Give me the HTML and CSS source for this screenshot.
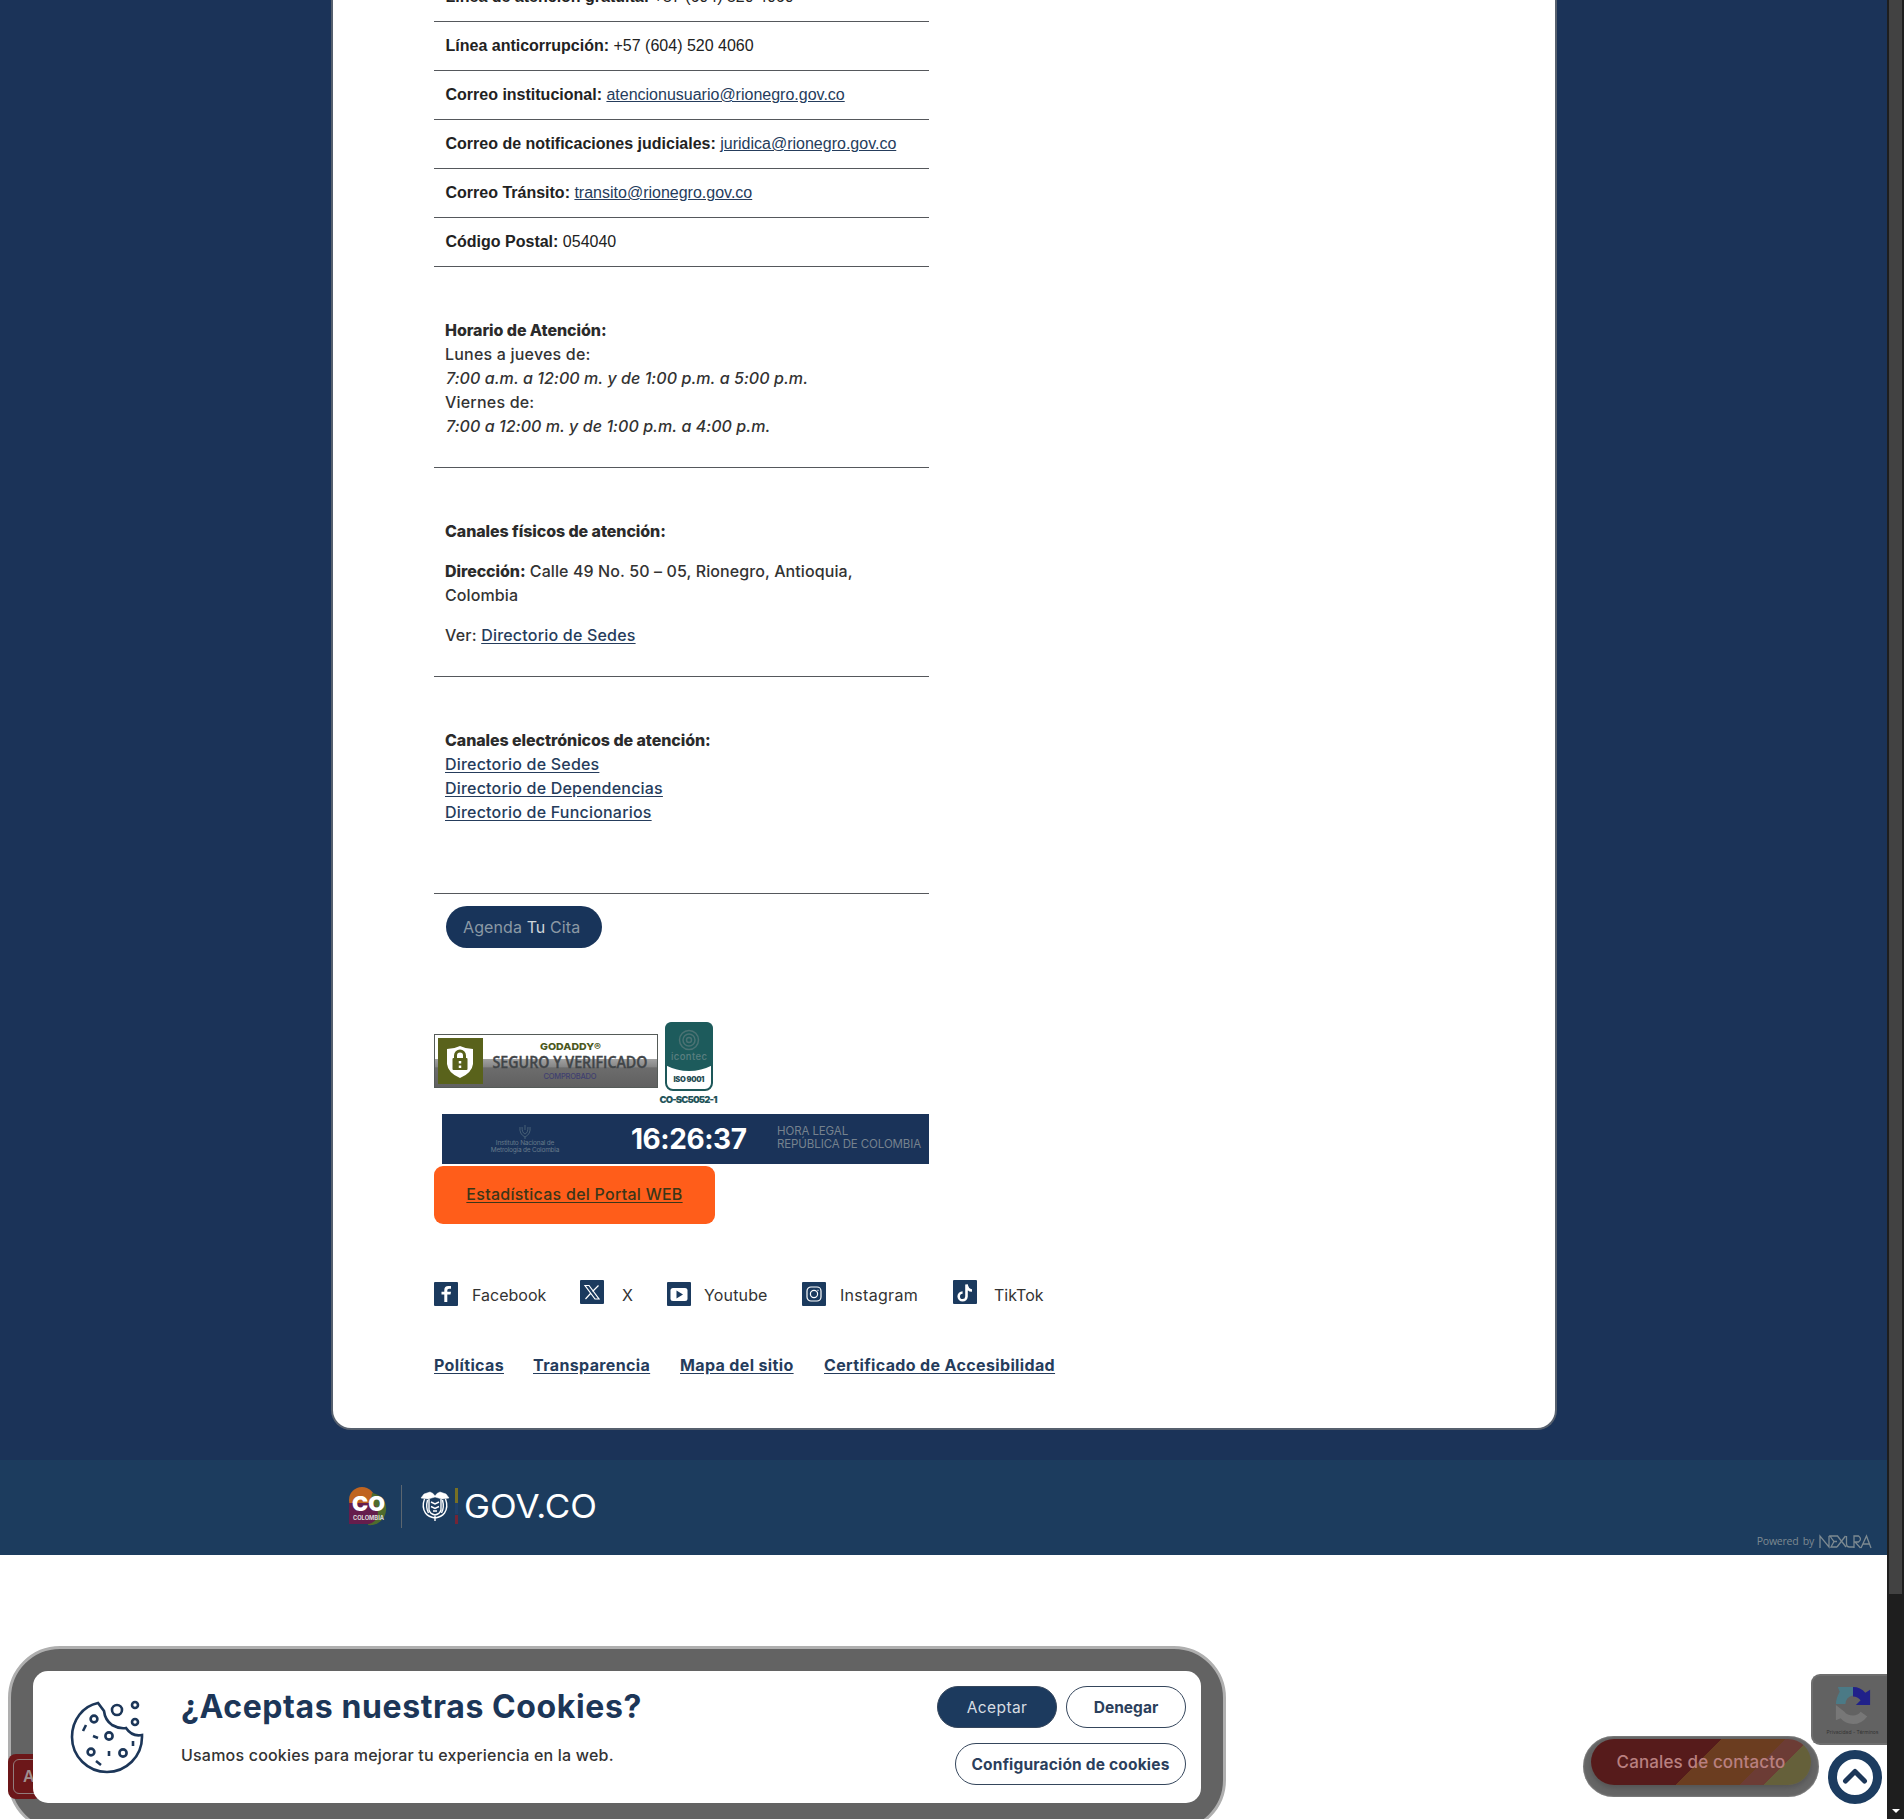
FILE: index.html
```html
<!DOCTYPE html>
<html lang="es">
<head>
<meta charset="utf-8">
<title>Alcaldía de Rionegro</title>
<link rel="stylesheet" href="styles.css">
</head>
<body>
<div class="window">
<div class="page">
  <main class="backdrop">
    <div class="card">
      <section class="contact">
        <p class="row row-cut"><b>Línea de atención gratuita:</b> +57 (604) 520 4060</p>
        <p class="row"><b>Línea anticorrupción:</b> +57 (604) 520 4060</p>
        <p class="row"><b>Correo institucional:</b> <a href="#">atencionusuario@rionegro.gov.co</a></p>
        <p class="row"><b>Correo de notificaciones judiciales:</b> <a href="#">juridica@rionegro.gov.co</a></p>
        <p class="row"><b>Correo Tránsito:</b> <a href="#">transito@rionegro.gov.co</a></p>
        <p class="row"><b>Código Postal:</b> 054040</p>
        <div class="block hours">
          <b>Horario de Atención:</b><br>Lunes a jueves de:<br><i>7:00 a.m. a 12:00 m. y de 1:00 p.m. a 5:00 p.m.</i><br>Viernes de:<br><i>7:00 a 12:00 m. y de 1:00 p.m. a 4:00 p.m.</i>
        </div>
        <div class="block places">
          <p><b>Canales físicos de atención:</b></p>
          <p class="address"><b>Dirección:</b> Calle 49 No. 50 – 05, Rionegro, Antioquia,<br>Colombia</p>
          <p>Ver: <a href="#">Directorio de Sedes</a></p>
        </div>
        <div class="block online">
          <b>Canales electrónicos de atención:</b><br><a href="#">Directorio de Sedes</a><br><a href="#">Directorio de Dependencias</a><br><a href="#">Directorio de Funcionarios</a>
        </div>
        <a class="appointment" href="#">Agenda <em>Tu</em> Cita</a>
      </section>

      <div class="seals">
        <svg class="seal" width="224" height="54" viewBox="0 0 224 54">
          <defs><linearGradient id="g" x1="0" y1="0" x2="0" y2="1"><stop offset="0" stop-color="#a2a2a2"/><stop offset=".28" stop-color="#858585"/><stop offset=".3" stop-color="#6c6c6c"/><stop offset="1" stop-color="#606060"/></linearGradient></defs>
          <rect width="224" height="54" fill="#fff"/><rect y="25" width="224" height="29" fill="url(#g)"/>
          <rect x=".5" y=".5" width="223" height="53" fill="none" stroke="#555b58"/>
          <rect x="4" y="4" width="45" height="46" fill="#59621b"/>
          <path d="M13 15q7 0 13-3q6 3 13 3v15q-1 9-13 14q-12-5-13-14z" fill="#fff"/>
          <rect x="18.500" y="24" width="15" height="12" rx="1" fill="#59621b"/><path d="M21.500 25v-3.500a4.500 4.500 0 0 1 9 0V25" fill="none" stroke="#59621b" stroke-width="3"/><path d="M26 27v2.500m0 2v2.500" stroke="#fff" stroke-width="2.500"/>
          <text x="136.500" y="16" class="s-brand" textLength="61" lengthAdjust="spacingAndGlyphs">GODADDY®</text>
          <text x="136" y="34" class="s-main" textLength="155" lengthAdjust="spacingAndGlyphs">SEGURO Y VERIFICADO</text>
          <text x="136" y="45" class="s-sub" textLength="53">COMPROBADO</text>
        </svg>
        <svg class="iso" width="60" height="84" viewBox="0 0 60 84">
          <rect x="7" y="1" width="46" height="67" rx="7" fill="#fff" stroke="#1d5759" stroke-width="2"/>
          <path d="M6 7q0-7 7-7h34q7 0 7 7v36q-24 12-48 0z" fill="#1d5b5c"/>
          <g fill="none" stroke="#4b7273" stroke-width="1.500"><circle cx="30" cy="18" r="9.500"/><circle cx="30" cy="18" r="6"/><circle cx="30" cy="18" r="2.500"/></g>
          <text x="30" y="38" class="i-name" textLength="36">icontec</text>
          <text x="30" y="60" class="i-iso" textLength="31">ISO 9001</text>
          <text x="29.500" y="81" class="i-code" textLength="58">CO-SC5052-1</text>
        </svg>
      </div>

      <div class="clock">
        <div class="institute">
          <svg width="14" height="16" viewBox="0 0 14 16" fill="none" stroke="#476077"><path d="M2 3q-1 7 5 10q6-3 5-10M7 1v5M4 3q0 6 3 7q3-1 3-7M7 13v2"/></svg>
          <span>Instituto Nacional de</span><span>Metrología de Colombia</span>
        </div>
        <span class="time">16:26:37</span>
        <span class="legal">HORA LEGAL<br>REPÚBLICA DE COLOMBIA</span>
      </div>
      <a class="stats" href="#">Estadísticas del Portal WEB</a>

      <nav class="social">
        <span class="net fb"><svg viewBox="0 0 24 24"><rect width="24" height="24" rx="1"/><path fill="#fff" d="M10.300 20v-7.500H7.500v-2.700h2.800V8q0-4 4-4h2.700v2.700h-2q-1.700 0-1.700 1.500v1.600H17l-.5 2.700h-3.200V20z"/></svg><b>Facebook</b></span>
        <span class="net tw up"><svg viewBox="0 0 24 24"><rect width="24" height="24" rx="1"/><path fill="none" stroke="#fff" stroke-width="1.200" d="M5 5.500h4L19 19h-4zM18.500 5.500l-6 6M10.500 13.500L5.500 19"/></svg><b>X</b></span>
        <span class="net yt"><svg viewBox="0 0 24 24"><rect width="24" height="24" rx="1"/><rect x="3.500" y="6" width="17" height="13" rx="2.500" fill="#fff"/><path d="M9.500 8.500v8l6.500-4z"/></svg><b>Youtube</b></span>
        <span class="net ig"><svg viewBox="0 0 24 24"><rect width="24" height="24" rx="1"/><g fill="none" stroke="#fff" stroke-width="1.200"><rect x="5" y="5" width="14" height="14" rx="4"/><circle cx="12" cy="12" r="3.600"/><path d="M15.500 8.300h1"/></g></svg><b>Instagram</b></span>
        <span class="net tt up"><svg viewBox="0 0 24 24"><rect width="24" height="24" rx="1"/><path fill="none" stroke="#fff" stroke-width="2.600" d="M19 10.500q-4.500 0-5.500-6v12a3.900 3.900 0 1 1-3.900-4"/></svg><b>TikTok</b></span>
      </nav>
      <nav class="links"><a class="k1" href="#">Políticas</a><a class="k2" href="#">Transparencia</a><a class="k3" href="#">Mapa del sitio</a><a class="k4" href="#">Certificado de Accesibilidad</a></nav>
    </div>
  </main>

  <footer class="footer">
    <svg class="govlogo" width="252" height="46" viewBox="0 0 252 46">
      <circle cx="14" cy="15" r="13" fill="#bf6420"/><path d="M24 8a16 16 0 1 1-4 32z" fill="#4f6b2d"/><path d="M1 18h22a11 11 0 0 1-2 21H1z" fill="#651d4c"/>
      <text x="4" y="26" class="co" textLength="33" lengthAdjust="spacingAndGlyphs">CO</text>
      <text x="5" y="34.500" class="colombia" textLength="31" lengthAdjust="spacingAndGlyphs">COLOMBIA</text>
      <path d="M53.500 0v43" stroke="#5b6670"/>
      <g fill="none" stroke="#fff" stroke-width="1.400"><path d="M76 9l6-2 3 1.500L87 11l2-2.500L92 7l6 2 3 4-7 1-7-2-7 2-7-1z" fill="#fff" stroke-width=".5"/><path d="M76.500 14q-3 8 1 14 3 4 9.500 5 6.500-1 9.500-5 4-6 1-14M79.500 15q-2 8 1 13M94.500 15q2 8-1 13M81 14v11q1 4 6 5 5-1 6-5V14M83 17l4 2 4-2M83 21.500l4 2 4-2M85 26h4M87 31v5"/></g>
      <path d="M108.500 3v15" stroke="#777024" stroke-width="3"/><path d="M108.500 18v11" stroke="#20416b" stroke-width="3"/><path d="M108.500 30v9" stroke="#732536" stroke-width="3"/>
      <text x="116" y="33" class="gov" textLength="133" lengthAdjust="spacingAndGlyphs">GOV.CO</text>
    </svg>
    <div class="powered"><span>Powered by</span>
      <svg width="53" height="15" viewBox="0 0 53 15" fill="none" stroke="#7c8991" stroke-width="1.300"><path d="M1 14V2l9 11V2M19 2h-8q2 3 4 5.500L12 13h6M14.500 7.500H18M18.500 2l8.500 11M26.500 2L18 13M27.500 2v8q0 3 3 3H35M35 14V2h4.500q4 3 0 6H36l5.500 6M42 14l5.500-12L52 14M44 10h6"/></svg>
    </div>
  </footer>
</div>
<div class="scrollbar"><div class="thumb"></div><div class="arrow"></div></div>
</div>

<div class="shade"></div>
<div class="access">A</div>
<div class="cookies">
  <svg class="cookie" width="74" height="76" viewBox="0 0 74 76" fill="none" stroke="#1c3658" stroke-width="2.600"><path d="M28 4C13 7 2 21 2 38a35 35 0 0 0 70 0v-2q-10 2-16-7-7 1-14-3-7-5-8-14z"/><circle cx="47" cy="11" r="5"/><circle cx="65" cy="6" r="3"/><circle cx="65" cy="23" r="3"/><circle cx="24" cy="20" r="3.400"/><circle cx="39" cy="37" r="3.600"/><circle cx="21" cy="53" r="3.400"/><circle cx="53" cy="54" r="3.600"/><path d="M16 26l-3 6M23 37l5 2M63 42v5M39 52v5M26 62l5 4"/></svg>
  <div class="ask"><h2>¿Aceptas nuestras Cookies?</h2><p>Usamos cookies para mejorar tu experiencia en la web.</p></div>
  <div class="choices"><button class="yes">Aceptar</button><button class="no">Denegar</button><button class="conf">Configuración de cookies</button></div>
</div>
<div class="channels"><div class="pill">Canales de contacto</div></div>
<div class="captcha">
  <svg width="38" height="38" viewBox="0 0 40 40"><path d="M4 1h16v9a10 10 0 0 0-8 9H2q0-6 4-13z" fill="#4b7a86"/><path d="M20 1q8 0 13 6l5-3v16H23l5-5q-3-4-8-4z" fill="#20218a"/><path d="M2 20l9 7q3 4 9 4 5 0 8-4l7 5q-6 8-15 8-8 0-13-6l-5 2z" fill="#777"/></svg>
  <span>Privacidad - Términos</span>
</div>
<div class="totop"><svg width="54" height="54" viewBox="0 0 54 54"><circle cx="27" cy="27" r="22.500" fill="#fff" stroke="#1c3c60" stroke-width="9"/><path d="M17.500 31l9.500-9.500 9.500 9.500" fill="none" stroke="#1c3658" stroke-width="5" stroke-linecap="round" stroke-linejoin="round"/></svg></div>
</body>
</html>
```
FILE: styles.css
```css
* { box-sizing: border-box; }
body { margin: 0; background: #fff; font: 500 16px/24px Inter, "Open Sans", sans-serif; color: #333; overflow: hidden; }
p, h2 { margin: 0; }
a { color: #253c5c; text-underline-offset: 2px; }
.window { display: flex; height: 1819px; }
.page { width: 1887px; }
.backdrop { height: 1460px; background: #1b3358; padding-left: 331px; overflow: hidden; }
.card { width: 1226px; height: 1430px; border: 2px solid #56606e; border-top: 0; border-radius: 0 0 20px 20px; background: #fff; padding-left: 101px; }
.contact { display: flow-root; width: 495px; height: 1022px; }
.row { height: 49px; border-bottom: 1px solid #55585c; padding: 10px 11.5px 0; font: 16px/27px "Liberation Sans", Arial, sans-serif; color: #222; white-space: nowrap; }
.row-cut { height: 26px; margin-top: -4px; padding-top: 0; line-height: 2px; }
.row a { text-underline-offset: 1px; }
.block { padding: 51px 11px 0; border-bottom: 1px solid #55585c; white-space: nowrap; letter-spacing: .2px; }
.block b { font-weight: 800; color: #2b2b2b; letter-spacing: -.08px; }
.block i { letter-spacing: .07px; padding-left: 1px; }
.address { letter-spacing: .1px; }
.hours { height: 201px; }
.places { height: 209px; }
.places p { margin-bottom: 16px; }
.online { height: 217px; }
.appointment { display: block; width: 156px; height: 42px; margin: 12px 0 0 12px; padding-left: 17px; border-radius: 21px; background: #18345a; color: #8b99a5; font-weight: 400; line-height: 42px; letter-spacing: .1px; text-decoration: none; }
.appointment em { font-style: normal; color: #cfd5da; }
.seals { display: flex; height: 92px; }
.seal { margin-top: 12px; }
.seals text { text-anchor: middle; }
.s-brand { font: 800 9.500px Inter, sans-serif; fill: #4b5820; }
.s-main { font: 600 17px "Open Sans", sans-serif; fill: #414548; stroke: #414548; stroke-width: .4px; }
.s-sub { font: 500 7.500px Inter, sans-serif; fill: #3f3f70; }
.iso { margin-left: 1px; }
.i-name { font: 500 9.500px Inter, sans-serif; fill: #5b7f80; }
.i-iso { font: 900 7.500px Inter, sans-serif; fill: #274e54; }
.i-code { font: 900 9.500px Inter, sans-serif; fill: #24545a; }
.clock { width: 487px; height: 50px; margin-left: 8px; background: #1a3359; display: flex; align-items: center; }
.institute { width: 68px; margin-left: 49px; display: flex; flex-direction: column; align-items: center; font: 6.500px/7px Inter, sans-serif; letter-spacing: -.22px; color: #667a8b; white-space: nowrap; }
.time { width: 115px; margin-left: 72px; font: 700 28px/48px Inter, sans-serif; letter-spacing: -.45px; color: #fff; white-space: nowrap; }
.legal { margin: -2px 0 0 31px; font: 400 11.500px/13px Inter, sans-serif; letter-spacing: -.1px; color: #76828e; white-space: nowrap; }
.stats { display: block; width: 281px; height: 58px; margin-top: 2px; border-radius: 9px; background: #ff5d1a; color: #3b3618; text-align: center; line-height: 57px; letter-spacing: .26px; }
.social { display: flex; height: 28px; margin-top: 56px; }
.net { display: flex; align-items: flex-start; padding-top: 2px; }
.net svg { width: 24px; height: 24px; fill: #1b3a5e; flex: none; }
.net.up svg { margin-top: -2px; }
.net b { font-weight: 400; line-height: 27px; margin-left: 14px; }
.fb { width: 146px; } .tw { width: 87px; } .yt { width: 135px; } .ig { width: 151px; }
.net.tw b { margin-left: 18px; }
.net.tt b { margin-left: 17px; }
.net.yt b { margin-left: 13px; letter-spacing: .15px; }
.net.ig b { letter-spacing: .3px; }
.links { display: flex; margin-top: 45px; font-weight: 700; letter-spacing: .36px; white-space: nowrap; }
.k1 { width: 99px; } .k2 { width: 147px; } .k3 { width: 144px; }
.footer { height: 95px; background: #1c3c5e; display: flex; justify-content: space-between; padding: 25px 15px 0 348px; }
.co { font: 900 20px Inter, sans-serif; fill: #fff; }
.colombia { font: 700 5.500px Inter, sans-serif; fill: #ddd; }
.gov { font: 400 33px Inter, sans-serif; fill: #fff; }
.powered { display: flex; align-items: center; gap: 5px; height: 15px; margin-top: 49px; font: 400 10.500px/15px "Open Sans", sans-serif; letter-spacing: -.25px; word-spacing: 2px; color: #7c8991; }
.scrollbar { width: 17px; background: #1e1e1e; padding: 0 2px; }
.thumb { height: 1594px; background: #424242; }
.arrow { width: 8px; margin: 215px 0 0 3px; border: 4px solid transparent; border-top-color: #fff; }
.shade { position: absolute; left: 8px; top: 1646px; width: 1218px; height: 186px; border: 3px solid #afafaf; border-radius: 52px; background: #636363; }
.access { position: absolute; left: 8px; top: 1754px; width: 34px; height: 45px; border-radius: 8px; background: #6c1719; color: #a08e8e; line-height: 45px; padding-left: 15px; font-weight: 600; }
.access::before { content: ""; position: absolute; inset: 5px -6px 5px 5px; border: 1px solid #927c7c; border-radius: 6px; }
.cookies { position: absolute; left: 33px; top: 1671px; width: 1168px; height: 132px; border-radius: 15px; background: #fff; display: flex; }
.cookie { margin: 28px 0 0 37px; flex: none; }
.ask { margin-left: 37px; width: 600px; white-space: nowrap; }
.ask h2 { font: 700 32px/40px Inter, sans-serif; letter-spacing: .6px; color: #1c3658; margin-top: 16px; }
.ask p { margin-top: 16px; letter-spacing: .2px; }
.choices { width: 250px; margin: 15px 15px 0 auto; display: flex; flex-wrap: wrap; justify-content: flex-end; gap: 15px 9px; align-content: flex-start; }
.choices button { width: 120px; height: 42px; border: 1px solid #35465c; border-radius: 21px; background: #fff; color: #2b3f5c; font: 700 15.500px Inter, sans-serif; padding: 0; white-space: nowrap; }
.choices .yes { background: #1c3a5e; color: #d7dde2; font-weight: 400; letter-spacing: .4px; }
.choices .conf { width: 231px; letter-spacing: .18px; }
.channels { position: absolute; left: 1583px; top: 1736px; width: 236px; height: 61px; border-radius: 31px; background: #666; padding: 3px 8px; box-shadow: inset 0 0 2px #aaa; }
.pill { width: 220px; height: 46px; border-radius: 23px; background: linear-gradient(135deg, #561b1b 0 49%, #6b3d20 49% 73%, #6c3c35 73% 82%, #65603a 82%); color: #b98080; line-height: 46px; text-align: center; white-space: nowrap; font-size: 17px; letter-spacing: .12px; box-shadow: 0 3px 5px #555; }
.captcha { position: absolute; left: 1811px; top: 1674px; width: 76px; height: 71px; border-radius: 9px 0 0 9px; background: #626262; border: 2px solid #6e6e6e; border-right: 0; display: flex; flex-direction: column; align-items: center; padding: 10px 0 0 5px; }
.captcha span { font: 5px/10px Inter, sans-serif; color: #333; margin-top: 3px; }
.totop { position: absolute; left: 1828px; top: 1750px; height: 54px; }
```
